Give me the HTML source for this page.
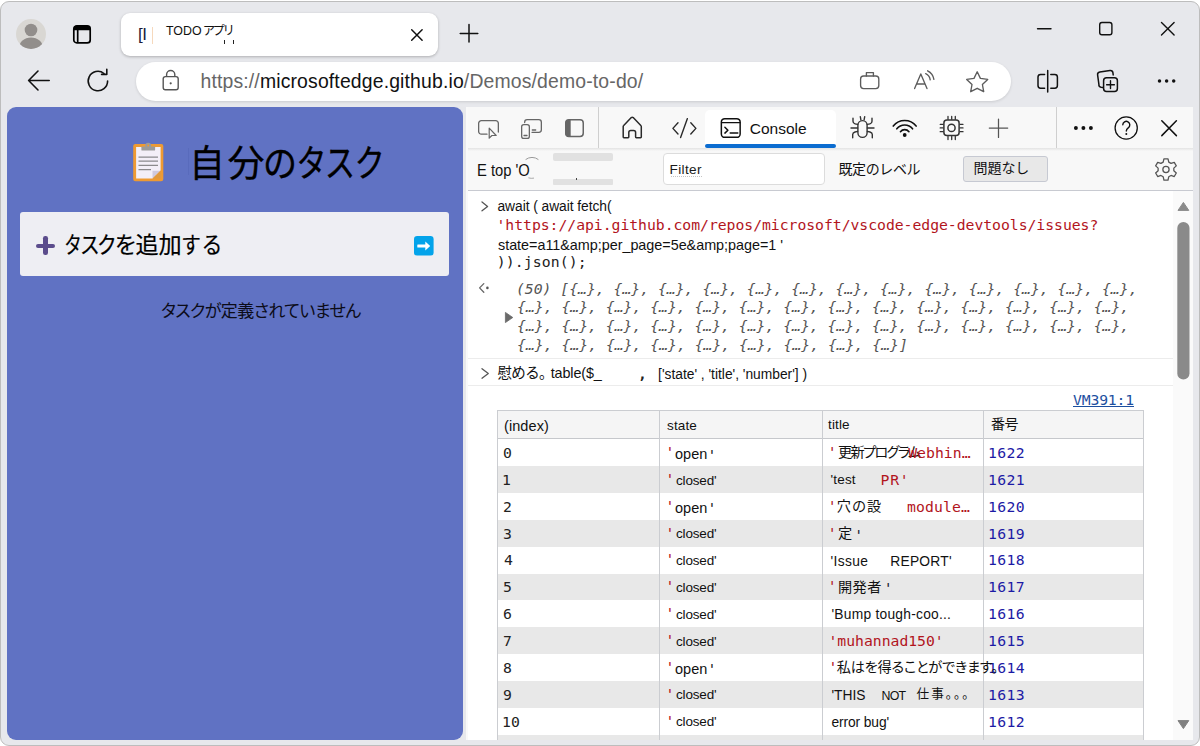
<!DOCTYPE html>
<html lang="ja">
<head>
<meta charset="utf-8">
<title>TODO アプリ</title>
<style>
html,body{margin:0;padding:0;background:#fff;}
body{width:1200px;height:746px;overflow:hidden;position:relative;font-family:"Liberation Sans","Noto Sans CJK JP",sans-serif;color:#111;}
.abs{position:absolute;}
#win{position:absolute;left:0;top:1px;width:1198px;height:743px;border:1px solid #bdbdbd;border-radius:9px;background:#e7e8ec;overflow:hidden;}
#tab{left:120px;top:11.500px;width:317px;height:43.500px;background:#fff;border-radius:9px;box-shadow:0 1px 3px rgba(0,0,0,.25);}
#addr{left:135px;top:60.500px;width:875px;height:39.500px;background:#fff;border-radius:20px;box-shadow:0 1px 3px rgba(0,0,0,.12);}
#url{left:199.5px;top:67.8px;font-size:19.4px;letter-spacing:0.15px;color:#666;white-space:nowrap;line-height:24px;}
#url b{font-weight:normal;color:#111;}
#page{left:6px;top:106px;width:456px;height:633px;background:#6072c3;border-radius:9px;overflow:hidden;}
#dt{left:467px;top:106px;width:725px;height:633px;background:#fff;box-shadow:-2px 0 0 #f9f9f9;}

#tabtitle{left:165px;top:20.600px;font-size:12.4px;line-height:18px;color:#111;white-space:nowrap;}

#h1{left:0;top:30px;width:456px;height:56px;font-size:37px;line-height:56px;color:#000;white-space:nowrap;font-family:"Liberation Sans","Noto Sans CJK JP",sans-serif;font-feature-settings:"palt";}
#addbox{left:12.500px;top:105px;width:429.700px;height:64px;background:#eeeef3;border-radius:3px;}
#addtxt{left:0.800px;top:18.200px;width:300px;height:32px;font-size:22.500px;line-height:32px;color:#000;white-space:nowrap;}
#addtxt span{position:absolute;top:0;width:30px;text-align:center;display:block;-webkit-text-stroke:0.200px #000;}
#empty{left:154px;top:192px;letter-spacing:-0.55px;font-size:17px;line-height:26px;color:#0c0c18;white-space:nowrap;font-feature-settings:"palt";}

#contab{left:281.800px;top:11.400px;font-size:15.500px;line-height:22px;color:#111;}
#ctx{left:9.300px;top:51.500px;font-size:16.400px;line-height:22px;color:#111;white-space:nowrap;transform:scaleX(0.9);transform-origin:0 0;}
#filt{left:201.600px;top:51.900px;font-size:13.600px;letter-spacing:0.350px;line-height:22px;color:#1a1a1a;}
#lvl{left:370.500px;top:51.200px;font-size:14px;line-height:22px;color:#111;white-space:nowrap;letter-spacing:-0.4px;}
#issues{left:505.600px;top:49.800px;font-size:14px;line-height:22px;color:#111;white-space:nowrap;letter-spacing:-0.100px;}

#con div{white-space:nowrap;line-height:20px;}
.s{font-family:"Liberation Sans","Noto Sans CJK JP",sans-serif;font-size:13.800px;color:#111;}
.m{font-family:"DejaVu Sans Mono","Liberation Mono","Noto Sans CJK JP",monospace;font-size:14.760px;color:#222;}
.mi{font-family:"DejaVu Sans Mono","Liberation Mono","Noto Sans CJK JP",monospace;font-size:14.760px;font-style:italic;color:#555;}
.red{color:#b2151d;}
.num{color:#1c1aa5;}
.lnk{color:#1d4f9f;text-decoration:underline;}
.cj{font-family:"Liberation Sans","Noto Sans CJK JP",sans-serif;font-feature-settings:"palt";}
.c13{font-size:14.200px;color:#111;}
.hd{font-size:13.500px;}
#h1 span{-webkit-text-stroke:0.350px #000;position:absolute;top:0;width:40px;text-align:center;display:block;}
#w2{position:absolute;left:0;top:-1px;width:1198px;height:744px;}
</style>
</head>
<body>
<div id="win"><div id="w2">
  <!-- ===== tab strip ===== -->
  <svg class="abs" style="left:13.800px;top:17.300px" width="32" height="32" viewBox="0 0 32 32">
    <defs><clipPath id="avc"><circle cx="16" cy="16" r="15"/></clipPath></defs>
    <circle cx="16" cy="16" r="15" fill="#d9d7d3"/>
    <g clip-path="url(#avc)" fill="#928e8b"><circle cx="16" cy="12" r="6.3"/><ellipse cx="16" cy="30" rx="12" ry="10.5"/></g>
  </svg>
  <svg class="abs" style="left:71px;top:23px" width="22" height="22" viewBox="0 0 22 22" fill="none" stroke="#000" stroke-width="1.700">
    <rect x="1.800" y="1.900" width="16.400" height="17" rx="3"/><path d="M2.600 2h14.800a.9.900 0 0 1 .9.900V6.200H1.700V2.900a.9.900 0 0 1 .9-.9z" fill="#000" stroke="none"/><path d="M5.700 6v12.600"/>
  </svg>
  <div class="abs" id="tab"></div>
  <div class="abs" style="left:137px;top:22px;font-size:17px;line-height:24px;color:#1a1a3a;letter-spacing:-0.5px">[I</div>
  <div class="abs" style="left:151.300px;top:26px;width:1px;height:16.500px;background:#f6d9bd"></div>
  <div class="abs" id="tabtitle">TODO <span class="cj" style="letter-spacing:-1.350px;margin-left:-1.900px">アプリ</span></div>
  <div class="abs" style="left:222.800px;top:39px;width:1.500px;height:3.600px;background:#222"></div>
  <div class="abs" style="left:231.800px;top:39px;width:1.500px;height:3.600px;background:#222"></div>
  <svg class="abs" style="left:408px;top:26px" width="16" height="16" viewBox="0 0 16 16" stroke="#111" stroke-width="1.500" stroke-linecap="round"><path d="M2.700 2.800 13.100 13.200M13.100 2.800 2.700 13.200"/></svg>
  <svg class="abs" style="left:457.200px;top:21px" width="22" height="22" viewBox="0 0 22 22" stroke="#111" stroke-width="1.500" stroke-linecap="round"><path d="M11 2.400v17.600M2.200 11.500h17.600"/></svg>
  <!-- window controls -->
  <svg class="abs" style="left:1029.200px;top:13.100px" width="160" height="30" viewBox="0 0 160 30" fill="none" stroke="#111" stroke-width="1.4" stroke-linecap="round">
    <path d="M7.5 14.7h13.5"/>
    <rect x="69.700" y="8.500" width="12.200" height="12.200" rx="2.200"/>
    <path d="M131.500 8.600 144.100 21.100M144.100 8.600 131.500 21.100"/>
  </svg>
  <!-- ===== address row ===== -->
  <svg class="abs" style="left:23.100px;top:64.800px" width="30" height="30" viewBox="0 0 30 30" fill="none" stroke="#111" stroke-width="1.6" stroke-linecap="round" stroke-linejoin="round"><path d="M4.6 14.5h20.6M14 5 4.6 14.5 14 24"/></svg>
  <svg class="abs" style="left:82.100px;top:65px" width="30" height="30" viewBox="0 0 30 30" fill="none" stroke="#111" stroke-width="1.6" stroke-linecap="round" stroke-linejoin="round"><path d="M24.6 15a9.7 9.7 0 1 1-3.6-7.5"/><path d="M18.6 8.4h5.2V3.2" /></svg>
  <div class="abs" id="addr"></div>
  <svg class="abs" style="left:158.800px;top:67.200px" width="22" height="24" viewBox="0 0 22 24" fill="none" stroke="#555" stroke-width="1.4"><rect x="3.2" y="8.6" width="15" height="13.2" rx="2.2"/><path d="M6.6 8.6V6.6a4.1 4.1 0 0 1 8.2 0v2"/><circle cx="10.7" cy="15.3" r="1.1" fill="#555" stroke="none"/></svg>
  <div class="abs" id="url">https://<b>microsoftedge.github.io</b>/Demos/demo-to-do/</div>
  <!-- briefcase, read aloud, star -->
  <svg class="abs" style="left:855px;top:64.800px" width="140" height="30" viewBox="0 0 140 30" fill="none" stroke="#5c5c5c" stroke-width="1.35" stroke-linejoin="round" stroke-linecap="round">
    <rect x="4.6" y="10" width="18.2" height="12.6" rx="3"/><path d="M10.4 10V6.6h7V10"/>
    <path d="M58.6 22.6 64.8 7.9 71 22.6M60.6 18h8.5"/><path d="M69.7 7.6a8 8 0 0 1 4.5 6.2M71.6 4.8a11.5 11.5 0 0 1 6.3 8.6"/>
    <path d="M121.2 5.8 124.4 12.4 131.7 13.4 126.4 18.5 127.7 25.7 121.2 22.3 114.7 25.7 116 18.5 110.7 13.4 118 12.4z"/>
  </svg>
  <!-- split, collections, more -->
  <svg class="abs" style="left:1029px;top:65px" width="160" height="30" viewBox="0 0 160 30" fill="none" stroke="#111" stroke-width="1.5" stroke-linecap="round" stroke-linejoin="round">
    <path d="M14.6 8.4h-4a2.6 2.6 0 0 0-2.6 2.6v8.6a2.600 2.600 0 0 0 2.600 2.600h4M20.800 8.400h4a2.600 2.600 0 0 1 2.600 2.600v8.600a2.600 2.600 0 0 1-2.600 2.600h-4M17.700 4.400v21.600"/>
    <path d="M72.800 21.400l-1.700-.2a2.600 2.600 0 0 1-2.200-2.900l-1.300-9.500a2.600 2.600 0 0 1 2.200-2.900l10.200-1.400a2.600 2.600 0 0 1 2.900 2.200l.3 2.200"/>
    <rect x="73.600" y="11.800" width="13.800" height="13.800" rx="3"/><path d="M80.500 14.800v7.800M76.600 18.700h7.800" stroke-width="1.4"/>
    <g fill="#111" stroke="none"><circle cx="129.500" cy="15" r="1.750"/><circle cx="136.600" cy="15" r="1.750"/><circle cx="143.700" cy="15" r="1.750"/></g>
  </svg>
  <!-- ===== page ===== -->
  <div class="abs" id="page">
    <svg class="abs" style="left:123.800px;top:32.600px" width="36" height="44" viewBox="0 0 36 44">
      <rect x="2.200" y="3.900" width="30.100" height="37.300" rx="2.200" fill="#ee9a33"/>
      <path d="M5.100 6.900h24.500v23.600l-8.100 8.100H5.100z" fill="#f3eff8"/>
      <path d="M21.500 30.800h7.800l-7.800 7.800z" fill="#cfc9de"/>
      <path d="M29.600 30.500v8.100h-8.100z" fill="#e0993f"/>
      <circle cx="17.200" cy="5.700" r="3" fill="#9c9b9a"/><rect x="10.400" y="6.600" width="13.700" height="4" rx=".6" fill="#9c9b9a"/><circle cx="17.200" cy="5.400" r="1" fill="#ee9a33"/>
      <g stroke="#8b8a8d" stroke-width="1.300"><path d="M7.500 17.200H27M7.500 21.200H27M7.500 25.300H27M7.500 29.600H20"/></g>
    </svg>
    <div class="abs" style="left:181px;top:41px;width:1px;height:27px;background:#596bbc"></div>
    <div class="abs" id="h1"><span style="left:179.7px;transform:scaleX(0.96)">自</span><span style="left:219.1px;transform:scaleX(1.0)">分</span><span style="left:253.4px;transform:scaleX(0.92)">の</span><span style="left:283.6px;transform:scaleX(0.82)">タ</span><span style="left:312.6px;transform:scaleX(0.82)">ス</span><span style="left:341.6px;transform:scaleX(0.82)">ク</span></div>
    <div class="abs" id="addbox">
      <div class="abs" style="left:16.500px;top:31.500px;width:19px;height:4.400px;background:#5b4c8c;border-radius:2.200px"></div>
      <div class="abs" style="left:23.900px;top:24.100px;width:4.400px;height:19px;background:#5b4c8c;border-radius:2.200px"></div>
      <div class="abs" id="addtxt"><span style="left:37.9px;transform:scaleX(0.78)">タ</span><span style="left:54.6px;transform:scaleX(0.88)">ス</span><span style="left:72.1px;transform:scaleX(0.88)">ク</span><span style="left:90.9px;transform:scaleX(0.99)">を</span><span style="left:111.9px;transform:scaleX(1.03)">追</span><span style="left:134.6px;transform:scaleX(1.03)">加</span><span style="left:156.1px;transform:scaleX(0.87)">す</span><span style="left:176.6px;transform:scaleX(0.93)">る</span></div>
      <svg class="abs" style="left:394.400px;top:23.500px" width="20" height="20" viewBox="0 0 20 20"><rect width="19.600" height="19.600" rx="3.200" fill="#03a3ea"/><path d="M3.800 8.500h7.500V5.600l4.900 4.400-4.900 4.400v-2.900H3.800a.5.500 0 0 1-.5-.5V9a.5.500 0 0 1 .5-.5z" fill="#fff"/></svg>
    </div>
    <div class="abs" id="empty">タスクが定義されていません</div>
  </div>
  <!-- ===== devtools ===== -->
  <div class="abs" id="dt">
    <div class="abs" style="left:0.00px;top:0.00px;width:725.00px;height:41.00px;background:#f8f8f8"></div>
    <div class="abs" style="left:0.00px;top:41.00px;width:725.00px;height:3.00px;background:linear-gradient(#e3e3e3,#f8f8f8)"></div>
    <div class="abs" style="left:0.00px;top:44.00px;width:725.00px;height:40.00px;background:#f8f8f8;border-bottom:1px solid #c8cad1;box-sizing:border-box"></div>
    <div class="abs" style="left:130.00px;top:0.00px;width:1.00px;height:41.00px;background:#cfcfcf"></div>
    <div class="abs" style="left:588.20px;top:0.00px;width:1.00px;height:41.00px;background:#cfcfcf"></div>
    <svg class="abs" style="left:6.00px;top:6.00px" width="120" height="32" viewBox="0 0 120 32" fill="none" stroke="#666" stroke-width="1.300" stroke-linejoin="round" stroke-linecap="round">
      <path d="M13 21.150H7.350a2.700 2.700 0 0 1-2.700-2.700v-8.100a2.700 2.700 0 0 1 2.700-2.700h14.300a2.700 2.700 0 0 1 2.700 2.700V19"/>
      <path d="M15.200 15.200v10l2.700-2.700h4.300z" stroke-width="1.200"/>
      <path d="M50.650 9.600V9.150a2.500 2.500 0 0 1 2.500-2.500h11.700a2.500 2.500 0 0 1 2.500 2.500v7.700a2.500 2.500 0 0 1-2.500 2.500H58"/>
      <rect x="47.650" y="11.650" width="7.700" height="13.700" rx="2.200"/><path d="M50 22.500h3M58.300 17h3.400"/>
      <rect x="91.750" y="6.750" width="17.500" height="16.800" rx="3.200" stroke-width="1.500"/><path d="M94.600 6.750h2.100v16.800h-2.100a3.200 3.200 0 0 1-3.200-3.200V9.950a3.200 3.200 0 0 1 3.200-3.200z" fill="#666" stroke="none"/>
</svg>
    <svg class="abs" style="left:150.00px;top:6.00px" width="90" height="32" viewBox="0 0 90 32" fill="none" stroke="#2a2a2a" stroke-width="1.500" stroke-linejoin="round" stroke-linecap="round">
      <path d="M5.200 24V13.600a1.500 1.500 0 0 1 .5-1.100l7.600-7.900a1.400 1.400 0 0 1 1.900 0l7.600 7.900a1.500 1.500 0 0 1 .5 1.100V24a.7.700 0 0 1-.7.700h-4.300a.7.700 0 0 1-.7-.7v-4.400a2 2 0 0 0-2-2h-2.800a2 2 0 0 0-2 2V24a.7.700 0 0 1-.7.700H5.900a.7.700 0 0 1-.7-.7z"/>
      <path d="M60 9.800 54.900 15.400 60 21M72.800 9.800 77.900 15.400 72.800 21M69.400 5.600 62.600 24.600" stroke-width="1.400"/>
</svg>
    <div class="abs" style="left:237.00px;top:2.70px;width:131.00px;height:38.30px;background:#fff;border-radius:5px 5px 0 0"></div>
    <div class="abs" style="left:237.00px;top:37.20px;width:131.00px;height:3.60px;background:#0b6cd0;border-radius:2px"></div>
    <svg class="abs" style="left:252.00px;top:10.00px" width="22" height="22" viewBox="0 0 22 22" fill="none" stroke="#111" stroke-width="1.500" stroke-linejoin="round" stroke-linecap="round">
      <rect x="1.350" y="1.650" width="18.800" height="18.700" rx="3.400"/><path d="M1.600 5.700h18.300" stroke-width="1.300"/><path d="M4.900 10.300 7.900 13.200 4.900 16.100M10.200 15.900h7.600"/>
</svg>
    <div class="abs" id="contab">Console</div>
    <svg class="abs" style="left:380.00px;top:6.00px" width="170" height="32" viewBox="0 0 170 32" fill="none" stroke="#333" stroke-width="1.400" stroke-linejoin="round" stroke-linecap="round">
      <rect x="9.900" y="7.600" width="9.200" height="16.800" rx="4.600"/>
      <path d="M12.300 3.700 12.900 6.800M16.700 3.700 16.100 6.800M5 5.300v3q0 2.200 2 2.600l2.600.5M24 5.300v3q0 2.200-2 2.600l-2.600.5M3 15h6.600M19.400 15H26M9.600 18.400 7 19q-2.300.6-2.300 2.600v3.100M19.400 18.400 22 19q2.300.6 2.300 2.600v3.100"/>
      <g stroke="#111" stroke-width="1.600"><path d="M45.270 13.070A14.500 14.500 0 0 1 68.130 13.070M48.820 15.840A10 10 0 0 1 64.580 15.840M52.440 18.670A5.400 5.400 0 0 1 60.960 18.670"/></g><circle cx="56.700" cy="22" r="1.900" fill="#111" stroke="none"/>
      <rect x="95.900" y="7" width="15.200" height="15.600" rx="3" stroke-width="1.500"/><circle cx="103.500" cy="14.900" r="3.600" stroke-width="1.500"/>
      <path d="M100 6.300V3.500M103.700 6.300V3.500M107.300 6.300V3.500M100 26.500v-3M103.700 26.500v-3M107.300 26.500v-3M95.200 11.300h-3M95.200 14.900h-3M95.200 18.700h-3M115 11.300h-3M115 14.900h-3M115 18.700h-3" stroke-width="1.300"/>
      <path d="M150.500 6v18.400M141.300 15h18.400" stroke="#555" stroke-width="1.250"/>
</svg>
    <svg class="abs" style="left:599.00px;top:5.00px" width="120" height="32" viewBox="0 0 120 32" fill="none" stroke="#111" stroke-width="1.400" stroke-linecap="round">
      <g fill="#111" stroke="none"><circle cx="8.900" cy="16" r="1.950"/><circle cx="16.400" cy="16" r="1.950"/><circle cx="23.900" cy="16" r="1.950"/></g>
      <circle cx="59.200" cy="16" r="11.100" stroke-width="1.300"/>
      <path d="M55.800 12.800a3.500 3.500 0 1 1 5.400 3c-1.300.9-1.900 1.600-1.900 3.200" stroke-width="1.400"/><circle cx="59.300" cy="22" r="1" fill="#111" stroke="none"/>
      <path d="M94.800 8.800 109.400 23.600M109.400 8.800 94.800 23.600" stroke-width="1.500"/>
</svg>
    <div class="abs" id="ctx">E top 'O</div>
    <svg class="abs" style="left:51.00px;top:48.00px" width="26" height="26" viewBox="0 0 26 26" fill="none" stroke="#999" stroke-width="1"><path d="M6.600 4.600a10.500 10.500 0 0 1 12.800 0"/><path d="M9.400 22.800a10.500 10.500 0 0 0 5.600.3" stroke="#aaa"/></svg>
    <div class="abs" style="left:85.20px;top:46.25px;width:60.00px;height:7.50px;background:#e1e1e1;border-radius:2px"></div>
    <div class="abs" style="left:85.20px;top:72.20px;width:60.00px;height:5.60px;background:#e1e1e1;border-radius:1px"></div>
    <div class="abs" style="left:107.80px;top:71.40px;width:1.40px;height:1.40px;background:#444"></div>
    <div class="abs" style="left:194.50px;top:46.25px;width:162.00px;height:32.00px;box-sizing:border-box;border:1px solid #dcdcdc;border-radius:4px;background:#fff"></div>
    <div class="abs" id="filt">Filter</div>
    <div class="abs" style="left:202.50px;top:69.00px;width:31.00px;height:0.00px;border-top:1px dotted #c4c4c4"></div>
    <div class="abs" id="lvl">既定のレベル</div>
    <div class="abs" style="left:494.90px;top:49.25px;width:84.80px;height:25.60px;box-sizing:border-box;border:1px solid #c6c9d2;border-radius:3px;background:#e8e8e8"></div>
    <div class="abs" id="issues">問題なし</div>
    <svg class="abs" style="left:684.40px;top:48.80px" width="28" height="28" viewBox="0 0 28 28" fill="none" stroke="#555" stroke-width="1.200" stroke-linejoin="round"><g transform="scale(1.075)"><path d="M11.100 2.600h3.800l.7 3.100 2.100 1.200 3-1 1.900 3.300-2.300 2.100v2.400l2.300 2.100-1.900 3.300-3-1-2.100 1.200-.7 3.100h-3.800l-.7-3.100-2.100-1.200-3 1-1.900-3.300 2.300-2.100v-2.400L3.400 9.200l1.900-3.300 3 1 2.100-1.200z"/><circle cx="13" cy="12.500" r="2.900"/></g></svg>
    <!-- console body -->
    <div id="con" class="abs" style="left:0;top:84px;width:706px;height:549px;overflow:hidden">
      <svg class="abs" style="left:10px;top:9px" width="14" height="16" viewBox="0 0 14 16" fill="none" stroke="#555" stroke-width="1.300" stroke-linecap="round" stroke-linejoin="round"><path d="M4 2 9.600 6.400 4 10.800"/></svg>
      <svg class="abs" style="left:9px;top:90px" width="14" height="14" viewBox="0 0 14 14" fill="none" stroke="#666" stroke-width="1.200" stroke-linecap="round" stroke-linejoin="round"><path d="M6.800 2.600 2.600 6.900 6.800 11.200" stroke-width="1.300"/><circle cx="10.400" cy="6.900" r="1.300" fill="#555" stroke="none"/></svg>
      <svg class="abs" style="left:35.500px;top:120px" width="12" height="14" viewBox="0 0 12 14"><path d="M1.400 1.400 8.800 6.500 1.400 11.600z" fill="#6a6a6a" stroke="#6a6a6a" stroke-width="0.800" stroke-linejoin="round"/></svg>
      <div class="abs" style="left:0;top:167px;width:706px;height:1px;background:#ececec"></div>
      <div class="abs" style="left:0;top:194px;width:706px;height:1px;background:#ececec"></div>
      <svg class="abs" style="left:10px;top:174.5px" width="14" height="16" viewBox="0 0 14 16" fill="none" stroke="#555" stroke-width="1.300" stroke-linecap="round" stroke-linejoin="round"><path d="M4 2.700 10.300 7.450 4 12.200"/></svg>
      <div class="abs" style="left:29.25px;top:219.00px;width:646.25px;height:400px;box-sizing:border-box;border:1px solid #cbcdd1;background:#fff"></div>
      <div class="abs" style="left:30.25px;top:220.00px;width:644.25px;height:27.00px;background:#f5f5f5;border-bottom:1px solid #c6c8cc"></div>
      <div class="abs" style="left:30.25px;top:275.15px;width:644.25px;height:26.85px;background:#e8e8e8"></div>
      <div class="abs" style="left:30.25px;top:328.85px;width:644.25px;height:26.85px;background:#e8e8e8"></div>
      <div class="abs" style="left:30.25px;top:382.55px;width:644.25px;height:26.85px;background:#e8e8e8"></div>
      <div class="abs" style="left:30.25px;top:436.25px;width:644.25px;height:26.85px;background:#e8e8e8"></div>
      <div class="abs" style="left:30.25px;top:489.95px;width:644.25px;height:26.85px;background:#e8e8e8"></div>
      <div class="abs" style="left:30.25px;top:543.65px;width:644.25px;height:26.85px;background:#e8e8e8"></div>
      <div class="abs" style="left:190.65px;top:219.00px;width:1.2px;height:400px;background:#cbcdd1"></div>
      <div class="abs" style="left:353.50px;top:219.00px;width:1.2px;height:400px;background:#cbcdd1"></div>
      <div class="abs" style="left:514.70px;top:219.00px;width:1.2px;height:400px;background:#cbcdd1"></div>
      <div id="c1" class="abs s" style="left:29.50px;top:5.60px;letter-spacing:-0.05px;">await ( await fetch(</div>
      <div id="c2" class="abs m red" style="left:28.50px;top:24.00px;letter-spacing:-0.03px;">'https://api.github.com/repos/microsoft/vscode-edge-devtools/issues?</div>
      <div id="c3" class="abs s" style="left:30.00px;top:44.00px;font-size:14.400px;letter-spacing:-0.03px;">state=a11&amp;amp;per_page=5e&amp;amp;page=1 '</div>
      <div id="c4" class="abs m" style="left:28.75px;top:61.30px;letter-spacing:0.11px;">)).json();</div>
      <div id="o1" class="abs mi" style="left:47.90px;top:87.50px;">(50) [{…}, {…}, {…}, {…}, {…}, {…}, {…}, {…}, {…}, {…}, {…}, {…}, {…},</div>
      <div id="o2" class="abs mi" style="left:49.10px;top:106.30px;letter-spacing:-0.01px;">{…}, {…}, {…}, {…}, {…}, {…}, {…}, {…}, {…}, {…}, {…}, {…}, {…}, {…},</div>
      <div id="o3" class="abs mi" style="left:49.10px;top:125.40px;letter-spacing:-0.01px;">{…}, {…}, {…}, {…}, {…}, {…}, {…}, {…}, {…}, {…}, {…}, {…}, {…}, {…},</div>
      <div id="o4" class="abs mi" style="left:49.10px;top:144.30px;">{…}, {…}, {…}, {…}, {…}, {…}, {…}, {…}, {…}]</div>
      <div id="t1a" class="abs cj" style="left:29.50px;top:172.40px;font-size:14.500px;color:#111;font-feature-settings:normal;letter-spacing:-0.67px;">慰める。</div>
      <div id="t1b" class="abs s" style="left:82.75px;top:171.70px;font-size:14.400px;letter-spacing:-0.14px;">table($_</div>
      <div id="t1c" class="abs m" style="left:170.00px;top:172.50px;"><b>,</b></div>
      <div id="t1d" class="abs s" style="left:190.10px;top:173.80px;letter-spacing:-0.01px;">['state' , 'title', 'number'] )</div>
      <div id="vm" class="abs m lnk" style="left:605.00px;top:199.00px;letter-spacing:-0.17px;">VM391:1</div>
      <div id="th0" class="abs s hd" style="left:36.00px;top:224.60px;font-size:14.500px;letter-spacing:0.08px;">(index)</div>
      <div id="th1" class="abs s hd" style="left:199.00px;top:224.60px;letter-spacing:0.15px;">state</div>
      <div id="th2" class="abs s hd" style="left:360.10px;top:224.40px;letter-spacing:0.10px;">title</div>
      <div id="th3" class="abs cj hd" style="left:522.90px;top:222.80px;font-size:14px;letter-spacing:-0.50px;">番号</div>
      <div id="i0" class="abs m" style="left:35.00px;top:252.00px;">0</div>
      <div id="q0" class="abs m red" style="left:197.40px;top:251.00px;">'</div>
      <div id="s0" class="abs s" style="left:207.00px;top:252.80px;font-size:14.500px;">open</div>
      <div id="e0" class="abs m" style="left:239.50px;top:253.50px;">'</div>
      <div id="n0" class="abs m num" style="left:520.00px;top:252.00px;letter-spacing:0.33px;">1622</div>
      <div id="i1" class="abs m" style="left:34.00px;top:278.85px;">1</div>
      <div id="q1" class="abs m red" style="left:197.40px;top:277.85px;">'</div>
      <div id="s1" class="abs s" style="left:208.00px;top:279.55px;font-size:13.500px;letter-spacing:-0.17px;">closed'</div>
      <div id="n1" class="abs m num" style="left:520.00px;top:278.85px;letter-spacing:0.33px;">1621</div>
      <div id="i2" class="abs m" style="left:35.00px;top:305.70px;">2</div>
      <div id="q2" class="abs m red" style="left:197.40px;top:304.70px;">'</div>
      <div id="s2" class="abs s" style="left:207.00px;top:306.50px;font-size:14.500px;">open</div>
      <div id="e2" class="abs m" style="left:239.50px;top:307.20px;">'</div>
      <div id="n2" class="abs m num" style="left:520.00px;top:305.70px;letter-spacing:0.33px;">1620</div>
      <div id="i3" class="abs m" style="left:35.00px;top:332.55px;">3</div>
      <div id="q3" class="abs m red" style="left:197.40px;top:331.55px;">'</div>
      <div id="s3" class="abs s" style="left:208.00px;top:333.25px;font-size:13.500px;letter-spacing:-0.17px;">closed'</div>
      <div id="n3" class="abs m num" style="left:520.00px;top:332.55px;letter-spacing:0.33px;">1619</div>
      <div id="i4" class="abs m" style="left:36.00px;top:359.40px;">4</div>
      <div id="q4" class="abs m red" style="left:197.40px;top:358.40px;">'</div>
      <div id="s4" class="abs s" style="left:208.00px;top:360.10px;font-size:13.500px;letter-spacing:-0.17px;">closed'</div>
      <div id="n4" class="abs m num" style="left:520.00px;top:359.40px;letter-spacing:0.33px;">1618</div>
      <div id="i5" class="abs m" style="left:35.00px;top:386.25px;">5</div>
      <div id="q5" class="abs m red" style="left:197.40px;top:385.25px;">'</div>
      <div id="s5" class="abs s" style="left:208.00px;top:386.95px;font-size:13.500px;letter-spacing:-0.17px;">closed'</div>
      <div id="n5" class="abs m num" style="left:520.00px;top:386.25px;letter-spacing:0.33px;">1617</div>
      <div id="i6" class="abs m" style="left:35.00px;top:413.10px;">6</div>
      <div id="q6" class="abs m red" style="left:197.40px;top:412.10px;">'</div>
      <div id="s6" class="abs s" style="left:208.00px;top:413.80px;font-size:13.500px;letter-spacing:-0.17px;">closed'</div>
      <div id="n6" class="abs m num" style="left:520.00px;top:413.10px;letter-spacing:0.33px;">1616</div>
      <div id="i7" class="abs m" style="left:35.00px;top:439.95px;">7</div>
      <div id="q7" class="abs m red" style="left:197.40px;top:438.95px;">'</div>
      <div id="s7" class="abs s" style="left:208.00px;top:440.65px;font-size:13.500px;letter-spacing:-0.17px;">closed'</div>
      <div id="n7" class="abs m num" style="left:520.00px;top:439.95px;letter-spacing:0.33px;">1615</div>
      <div id="i8" class="abs m" style="left:35.00px;top:466.80px;">8</div>
      <div id="q8" class="abs m red" style="left:197.40px;top:465.80px;">'</div>
      <div id="s8" class="abs s" style="left:207.00px;top:467.60px;font-size:14.500px;">open</div>
      <div id="e8" class="abs m" style="left:239.50px;top:468.30px;">'</div>
      <div id="n8" class="abs m num" style="left:520.00px;top:466.80px;letter-spacing:0.33px;">1614</div>
      <div id="i9" class="abs m" style="left:35.00px;top:493.65px;">9</div>
      <div id="q9" class="abs m red" style="left:197.40px;top:492.65px;">'</div>
      <div id="s9" class="abs s" style="left:208.00px;top:494.35px;font-size:13.500px;letter-spacing:-0.17px;">closed'</div>
      <div id="n9" class="abs m num" style="left:520.00px;top:493.65px;letter-spacing:0.33px;">1613</div>
      <div id="i10" class="abs m" style="left:34.00px;top:520.50px;">10</div>
      <div id="q10" class="abs m red" style="left:197.40px;top:519.50px;">'</div>
      <div id="s10" class="abs s" style="left:208.00px;top:521.20px;font-size:13.500px;letter-spacing:-0.17px;">closed'</div>
      <div id="n10" class="abs m num" style="left:520.00px;top:520.50px;letter-spacing:0.33px;">1612</div>
      <div id="tq0" class="abs m red" style="left:359.80px;top:251.00px;">'</div>
      <div id="t0a" class="abs cj c13" style="left:370.00px;top:251.30px;letter-spacing:-1.67px;">更新プログラム</div>
      <div id="t0b" class="abs m red" style="left:440.20px;top:252.00px;letter-spacing:0.03px;">Webhin…</div>
      <div id="t1x" class="abs s" style="left:362.60px;top:278.75px;font-size:13.500px;letter-spacing:0.15px;">'test</div>
      <div id="t1y" class="abs m red" style="left:412.60px;top:278.85px;letter-spacing:0.70px;">PR'</div>
      <div id="tq2" class="abs m red" style="left:359.80px;top:304.70px;">'</div>
      <div id="t2a" class="abs cj c13" style="left:368.80px;top:305.00px;letter-spacing:1.20px;">穴の設</div>
      <div id="t2b" class="abs m red" style="left:439.10px;top:305.70px;letter-spacing:0.10px;">module…</div>
      <div id="tq3" class="abs m red" style="left:359.80px;top:331.55px;">'</div>
      <div id="t3a" class="abs cj c13" style="left:370.10px;top:331.85px;">定</div>
      <div id="t3b" class="abs m" style="left:386.20px;top:333.55px;color:#223;">'</div>
      <div id="t4a" class="abs s" style="left:362.60px;top:361.10px;letter-spacing:0.36px;">'Issue</div>
      <div id="t4b" class="abs s" style="left:422.20px;top:361.10px;letter-spacing:0.27px;">REPORT'</div>
      <div id="tq5" class="abs m red" style="left:359.80px;top:385.25px;">'</div>
      <div id="t5a" class="abs cj c13" style="left:369.90px;top:385.55px;letter-spacing:0.50px;">開発者</div>
      <div id="t5b" class="abs m" style="left:415.70px;top:387.25px;color:#223;">'</div>
      <div id="t6" class="abs s" style="left:363.50px;top:414.20px;letter-spacing:0.24px;">'Bump tough-coo...</div>
      <div id="t7" class="abs m red" style="left:360.50px;top:439.55px;letter-spacing:-0.02px;">'muhannad150'</div>
      <div id="tq8" class="abs m red" style="left:360.50px;top:465.80px;">'</div>
      <div id="t8" class="abs cj c13" style="left:368.80px;top:466.10px;letter-spacing:-0.23px;">私はを得ることができます。</div>
      <div id="t9a" class="abs s" style="left:363.50px;top:494.85px;letter-spacing:-0.05px;">'THIS</div>
      <div id="t9b" class="abs s" style="left:413.50px;top:494.85px;font-size:12.400px;letter-spacing:-0.80px;">NOT</div>
      <div id="t9c" class="abs cj" style="left:448.60px;top:492.85px;font-size:12.600px;color:#111;letter-spacing:1.95px;">仕事。。。</div>
      <div id="t10" class="abs s" style="left:363.50px;top:522.40px;letter-spacing:-0.11px;">error bug'</div>
    </div>
    <!-- scrollbar -->
    <div class="abs" style="left:704.800px;top:84px;width:20.200px;height:549px;background:#fafafa"></div>
    <svg class="abs" style="left:704.800px;top:83px" width="20" height="550" viewBox="0 0 20 550"><path d="M5 20.400 10.400 12.400 15.800 20.400z" fill="#8a8a8a" stroke="#8a8a8a" stroke-width="1" stroke-linejoin="round"/><rect x="4.300" y="32" width="12.200" height="157.600" rx="6.100" fill="#8a8a8a"/><path d="M5 530.600 10.400 538.600 15.800 530.600z" fill="#808080" stroke="#808080" stroke-width="1" stroke-linejoin="round"/></svg>
  </div>
</div></div>
</body>
</html>
